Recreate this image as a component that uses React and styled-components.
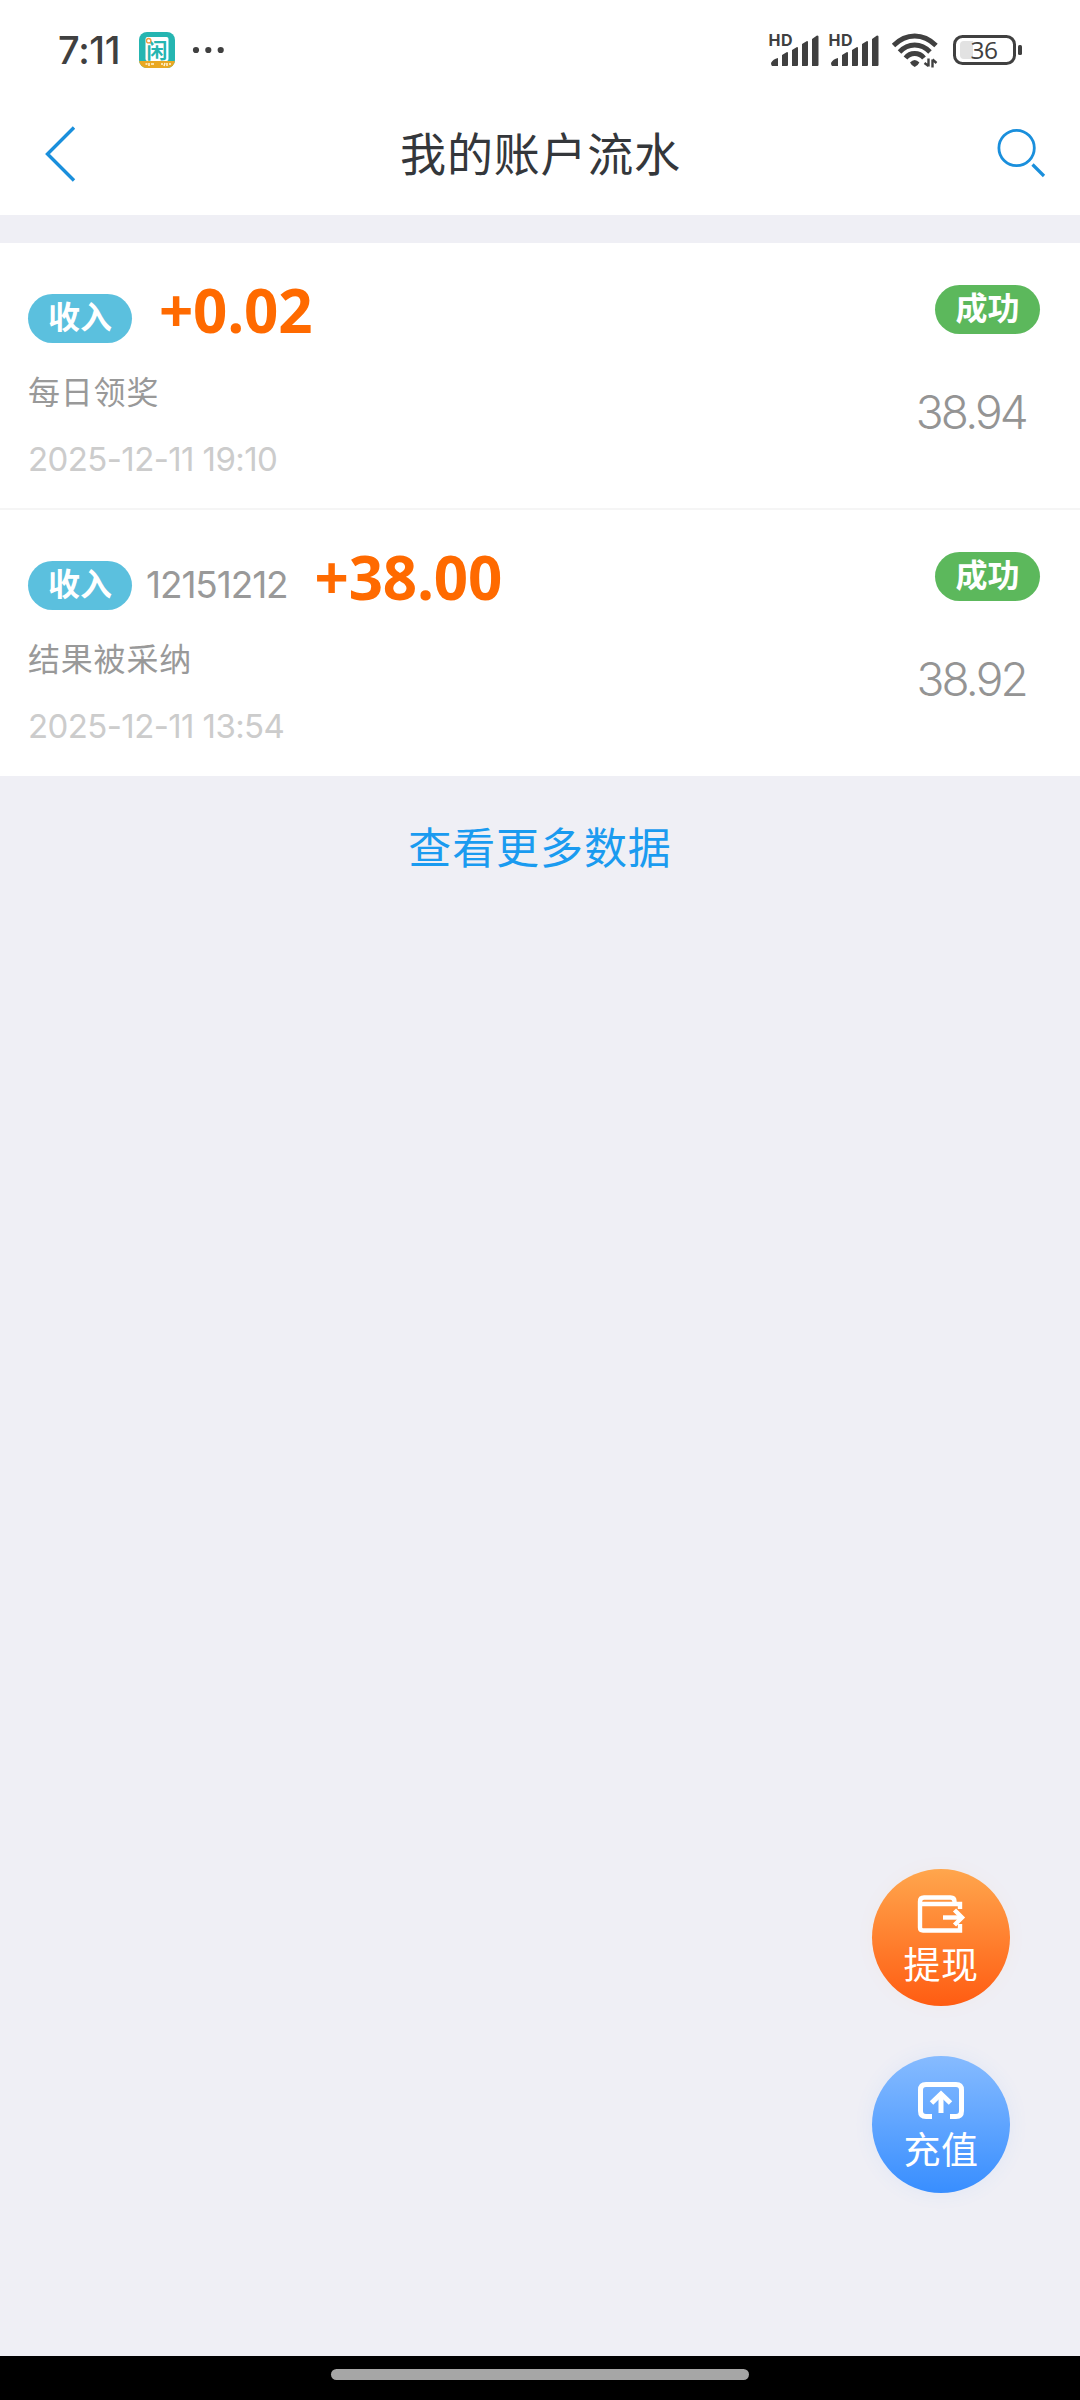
import styled, { createGlobalStyle } from "styled-components";

const GlobalStyle = createGlobalStyle`
  * {
    box-sizing: border-box;
  }

  body {
    margin: 0;
    background-color: #efeff5;
  }
`;

const Page = styled.div`
  display: flex;
  flex-direction: column;
  width: 1080px;
  height: 2400px;
  background-color: #efeff5;
  font-family: Inter, "Noto Sans CJK SC", sans-serif;
  white-space: nowrap;
`;

const StatusBar = styled.div`
  display: flex;
  justify-content: space-between;
  height: 100px;
  padding: 0 58px;
  background-color: #ffffff;
`;

const StatusGroup = styled.div`
  display: flex;
  align-items: center;
`;

const Clock = styled.span`
  width: 81px;
  font-size: 38px;
  font-weight: 500;
  line-height: 100px;
  letter-spacing: -0.3px;
  color: #404040;
`;

const Drawing = styled.svg`
  display: block;
  flex: none;
  overflow: visible;
  margin-left: ${(props) => props.$left || 0}px;
`;

const Header = styled.header`
  display: grid;
  grid-template-columns: 48px 1fr 48px;
  align-items: center;
  height: 115px;
  padding: 0 35px 7px 45px;
  background-color: #ffffff;
`;

const Title = styled.h1`
  margin: 0 9px 0 0;
  text-align: center;
  font-size: 46px;
  font-weight: 400;
  line-height: 60px;
  letter-spacing: 0.8px;
  color: #34373b;
`;

const List = styled.div`
  margin-top: 28px;
  background-color: #ffffff;
`;

const Row = styled.div`
  display: flex;
  justify-content: space-between;
  height: 267px;
  padding: 0 40px 0 28px;
  border-bottom: 2px solid #f5f5f5;

  &:last-child {
    height: 266px;
    border-bottom: none;
  }
`;

const Details = styled.div`
  display: flex;
  flex-direction: column;
`;

const Summary = styled.div`
  display: flex;
  align-items: flex-start;
  height: 110px;
`;

const Badge = styled.span`
  width: ${(props) => props.$width}px;
  height: 49px;
  margin-top: ${(props) => props.$top}px;
  border-radius: 25px;
  background-color: ${(props) => props.$color};
  color: #ffffff;
  font-size: 32px;
  font-weight: 700;
  line-height: 48px;
  text-align: center;
`;

const TaskId = styled.span`
  margin: 50px 0 0 14px;
  font-size: 37px;
  line-height: 49px;
  letter-spacing: -1.1px;
  color: #999999;
`;

const Amount = styled.span`
  margin: 37px 0 0 27px;
  font-family: "Open Sans", sans-serif;
  font-size: 60px;
  font-weight: 700;
  line-height: 60px;
  letter-spacing: -0.2px;
  color: #ff6a00;
`;

const Description = styled.span`
  margin-top: 17px;
  font-size: 32px;
  line-height: 46px;
  letter-spacing: 0.8px;
  color: #999999;
`;

const Time = styled.span`
  margin-top: 20px;
  font-size: 33px;
  font-weight: 400;
  line-height: 46px;
  letter-spacing: -0.6px;
  color: #cccccc;
`;

const Result = styled.div`
  display: flex;
  flex-direction: column;
  align-items: flex-end;
`;

const Balance = styled.span`
  margin: 48px 14px 0 0;
  font-size: 46px;
  font-weight: 350;
  line-height: 60px;
  letter-spacing: -2.8px;
  color: #949494;
`;

const MoreLink = styled.a`
  margin-top: 42px;
  text-align: center;
  font-size: 43px;
  line-height: 60px;
  letter-spacing: 0.9px;
  color: #1a9bf0;
`;

const Actions = styled.div`
  display: flex;
  flex-direction: column;
  gap: 50px;
  margin: auto 70px 163px auto;
`;

const ActionButton = styled.div`
  display: flex;
  flex-direction: column;
  align-items: center;
  width: 138px;
  height: 137px;
  padding-top: 25px;
  border-radius: 50%;
  background-image: linear-gradient(
    ${(props) => props.$from},
    ${(props) => props.$to}
  );
  box-shadow: 0 0 20px ${(props) => props.$glow};
`;

const ActionLabel = styled.span`
  margin-top: ${(props) => props.$top}px;
  font-size: 37px;
  line-height: 50px;
  letter-spacing: 0.5px;
  color: #ffffff;
`;

const NavBar = styled.div`
  display: flex;
  justify-content: center;
  height: 44px;
  padding-top: 13px;
  background-color: #000000;
`;

const NavHandle = styled.div`
  width: 418px;
  height: 11px;
  border-radius: 6px;
  background-color: #a6a6a6;
`;

const records = [
  {
    amount: "+0.02",
    description: "每日领奖",
    time: "2025-12-11 19:10",
    balance: "38.94",
  },
  {
    taskId: "12151212",
    amount: "+38.00",
    description: "结果被采纳",
    time: "2025-12-11 13:54",
    balance: "38.92",
  },
];

function AppIcon() {
  return (
    <Drawing width="36" height="36" viewBox="0 0 36 36">
      <clipPath id="app-icon">
        <rect width="36" height="36" rx="8" />
      </clipPath>
      <g clipPath="url(#app-icon)">
        <rect width="36" height="36" fill="#25b5b1" />
        <rect x="6.500" y="5" width="23" height="24" rx="2" fill="#ffffff" />
        <rect y="29" width="36" height="7" fill="#e9a822" />
        <path
          d="M6.500 32h2M10 31v3M12 32h3M22 32h2M25 34l1-3M28 31v3M30 32h2"
          stroke="#fff3d6"
          strokeWidth="1.500"
        />
      </g>
      <text
        x="18"
        y="25.500"
        textAnchor="middle"
        fontFamily="Noto Sans CJK SC"
        fontSize="21"
        fontWeight="700"
        fill="#25b5b1"
      >
        闲
      </text>
      <circle cx="9.700" cy="8.700" r="2.200" fill="#fff" stroke="#f09a3e" strokeWidth="1.300" />
    </Drawing>
  );
}

function Dots() {
  return (
    <Drawing $left={17} width="32" height="8" viewBox="0 0 32 8">
      <g fill="#404040">
        <circle cx="4" cy="4" r="3.100" />
        <circle cx="16.300" cy="4" r="3.100" />
        <circle cx="28.700" cy="4" r="3.100" />
      </g>
    </Drawing>
  );
}

function Signal({ left }) {
  return (
    <Drawing $left={left} width="50" height="34" viewBox="0 0 50 34">
      <text
        x="-0.500"
        y="13"
        textLength="24"
        fontFamily="Inter"
        fontSize="16"
        fontWeight="700"
        fill="#404040"
      >
        HD
      </text>
      <path
        d="M3 33q-1-1-1-3q2-4 7-5v8zM13 33v-11l5-3q1 0 1 1v12q0 1-1 1zM23 33v-16l5-3q1 0 1 1v17q0 1-1 1zM33 33v-22l5-3q1 0 1 1v23q0 1-1 1zM43 33v-27l5-3.500q1.500 0 1.500 1v28.500q0 1-1 1z"
        fill="#404040"
      />
    </Drawing>
  );
}

function Wifi() {
  return (
    <Drawing $left={13} width="46" height="34" viewBox="0 0 46 34">
      <g fill="none" stroke="#404040" strokeWidth="4.800">
        <path d="M1.500 12.500Q11 3 22.700 3T44 12.500" />
        <path d="M7.500 19Q14 12 22.700 12T38 19" />
        <path d="M13.500 25Q17 20.500 22.700 20.500T32 25" />
      </g>
      <path d="M18 29.500q4.700-5 9.400 0q-1.400 3-4.700 4.500q-3.300-1.500-4.700-4.500z" fill="#404040" />
      <path
        d="M36.500 25.500v8M32.500 30l4 3M40.500 34.500v-8M44.500 30l-4-3.500"
        fill="none"
        stroke="#404040"
        strokeWidth="2.400"
      />
    </Drawing>
  );
}

function Battery() {
  return (
    <Drawing $left={15} width="69" height="30" viewBox="0 0 69 30">
      <rect x="1.500" y="1.500" width="60" height="27" rx="8" fill="none" stroke="#404040" strokeWidth="3" />
      <path d="M20 6v18h-9q-4 0-4-4v-10q0-4 4-4z" fill="#e2e2e2" />
      <rect x="65" y="10" width="4" height="10" rx="1.500" fill="#404040" />
      <text
        x="31"
        y="23.500"
        textAnchor="middle"
        fontFamily="Open Sans"
        fontSize="24.500"
        letterSpacing="-0.400"
        fill="#404040"
      >
        36
      </text>
    </Drawing>
  );
}

function BackIcon() {
  return (
    <Drawing width="30" height="56" viewBox="0 0 30 56">
      <path d="M29 1.500L2.500 28L29 54.500" fill="none" stroke="#1a8fdc" strokeWidth="3.400" />
    </Drawing>
  );
}

function SearchIcon() {
  return (
    <Drawing width="48" height="50" viewBox="0 0 48 50">
      <g fill="none" stroke="#1a8fdc" strokeWidth="2.800">
        <circle cx="19.600" cy="19" r="17.700" />
        <path d="M35.500 35.500L47 47" strokeWidth="3.200" />
      </g>
    </Drawing>
  );
}

function WithdrawIcon() {
  return (
    <Drawing width="46" height="40" viewBox="0 0 46 40">
      <g fill="none" stroke="#ffffff" strokeWidth="4.400">
        <path d="M36.500 9.500V7.500q0-4-4-4H6q-4 0-4 4v26q0 3 3 3H42v-6.500" />
        <path d="M3 10H42v5" />
        <path d="M25 23.500h17" />
        <path d="M36.500 16l7.500 7.500l-7.500 7.500" />
      </g>
    </Drawing>
  );
}

function RechargeIcon() {
  return (
    <Drawing width="46" height="40" viewBox="0 0 46 40">
      <g fill="none" stroke="#ffffff" strokeWidth="5">
        <path d="M14 35.500H8q-5.500 0-5.500-5.500V9Q2.500 3.500 8 3.500h30q5.500 0 5.500 5.500v21q0 5.500-5.500 5.500h-6" />
        <path d="M23 32V14" />
        <path d="M13.500 22L23 13L32.500 22" />
      </g>
    </Drawing>
  );
}

function RecordRow({ record }) {
  return (
    <Row>
      <Details>
        <Summary>
          <Badge $width={104} $top={51} $color="#5bc0de">
            收入
          </Badge>
          {record.taskId && <TaskId>{record.taskId}</TaskId>}
          <Amount>{record.amount}</Amount>
        </Summary>
        <Description>{record.description}</Description>
        <Time>{record.time}</Time>
      </Details>
      <Result>
        <Badge $width={105} $top={42} $color="#5cb85c">
          成功
        </Badge>
        <Balance>{record.balance}</Balance>
      </Result>
    </Row>
  );
}

export default function App() {
  return (
    <Page>
      <GlobalStyle />
      <StatusBar>
        <StatusGroup>
          <Clock>7:11</Clock>
          <AppIcon />
          <Dots />
        </StatusGroup>
        <StatusGroup>
          <Signal />
          <Signal left={10} />
          <Wifi />
          <Battery />
        </StatusGroup>
      </StatusBar>
      <Header>
        <BackIcon />
        <Title>我的账户流水</Title>
        <SearchIcon />
      </Header>
      <List>
        {records.map((record) => (
          <RecordRow key={record.time} record={record} />
        ))}
      </List>
      <MoreLink>查看更多数据</MoreLink>
      <Actions>
        <ActionButton $from="#ffa64d" $to="#ff5c12" $glow="rgba(255, 120, 40, 0.04)">
          <WithdrawIcon />
          <ActionLabel $top={7}>提现</ActionLabel>
        </ActionButton>
        <ActionButton $from="#86bbff" $to="#388eff" $glow="rgba(60, 140, 255, 0.08)">
          <RechargeIcon />
          <ActionLabel $top={5}>充值</ActionLabel>
        </ActionButton>
      </Actions>
      <NavBar>
        <NavHandle />
      </NavBar>
    </Page>
  );
}
